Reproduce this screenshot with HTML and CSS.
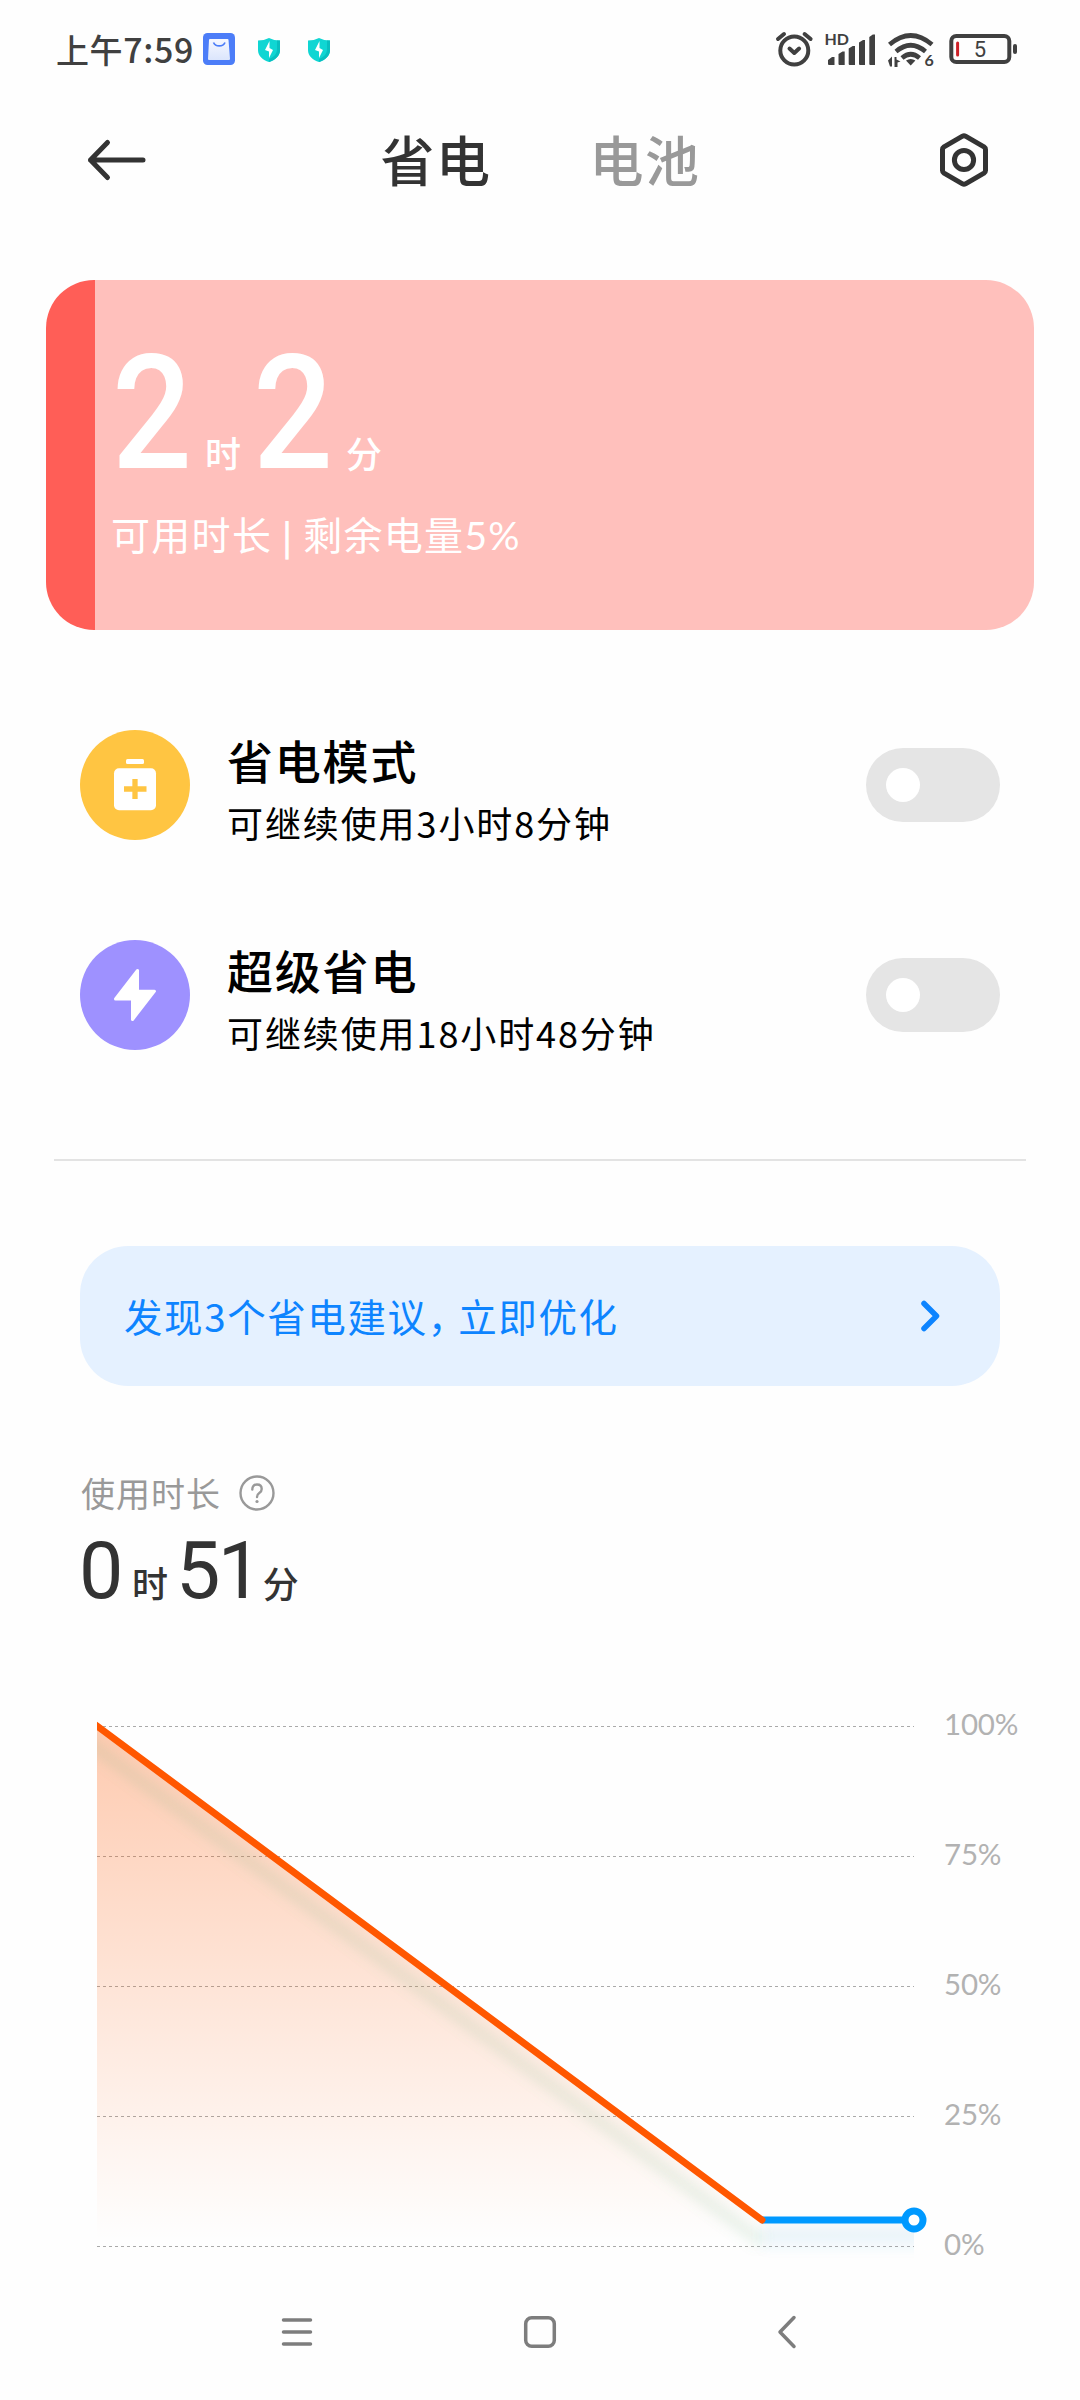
FILE: index.html
```html
<!DOCTYPE html>
<html lang="zh-CN">
<head>
<meta charset="utf-8">
<title>省电与电池</title>
<link rel="stylesheet" href="styles.css">
</head>
<body>
<div class="screen">
  <div class="status">
    <div class="status-left">
      <span class="clock">上午<span class="clock-digits">7:59</span></span>
      <svg class="app-icon" width="32" height="32" viewBox="0 0 32 32">
        <defs><linearGradient id="bag" x1="0" y1="0" x2="0" y2="1"><stop offset="0" stop-color="#f6f8ff"/><stop offset="1" stop-color="#dbe5fc"/></linearGradient></defs>
        <rect width="32" height="32" rx="4.5" fill="#4c7df8"/>
        <path d="M7 6h17.500q1 0 1 1l1.500 19q0 1-1 1H6q-1 0-1-1L6 7q0-1 1-1z" fill="url(#bag)"/>
        <path d="M10.500 9.500c2 4.500 9.500 4.500 11.500 0" fill="none" stroke="#4c7df8" stroke-width="1.700"/>
      </svg>
      <svg class="shield" width="22" height="24" viewBox="0 0 22 24">
        <path d="M11 0q5 2.500 11 2.500V12c0 6-5 10-11 12C5 22 0 18 0 12V2.500Q6 2.500 11 0z" fill="#0fd6d3"/>
        <path d="M19 2.400l3 .1V12c0 6-5 10-11 12l0-3c5-2 8-5 8-10z" fill="#08bfc0"/>
        <path d="M11.500 3v7l3.500 2-4 8v-6.500L7 12z" fill="#fff"/>
      </svg>
      <svg class="shield" width="22" height="24" viewBox="0 0 22 24">
        <path d="M11 0q5 2.500 11 2.500V12c0 6-5 10-11 12C5 22 0 18 0 12V2.500Q6 2.500 11 0z" fill="#0fd6d3"/>
        <path d="M19 2.400l3 .1V12c0 6-5 10-11 12l0-3c5-2 8-5 8-10z" fill="#08bfc0"/>
        <path d="M11.500 3v7l3.500 2-4 8v-6.500L7 12z" fill="#fff"/>
      </svg>
    </div>
    <svg width="245" height="40" viewBox="775 30 245 40" fill="none" stroke="#404040" stroke-linecap="round" stroke-linejoin="round">
      <g stroke-width="4">
        <circle cx="794.300" cy="50.500" r="14"/>
        <path d="M778 39l6-5M804.600 34l6 5M789.500 48.500l4.800 4.500 4.800-4.500"/>
      </g>
      <g fill="#404040" stroke="none">
        <text class="hd" x="824.500" y="45">HD</text>
        <path d="M828 60l4-3h2.500v8h-5.500q-1 0-1-1zM838.500 54l4-2.500h2.200V65h-5.200q-1 0-1-1zM848.700 48.500l4-2.500h2.300V65h-5.300q-1 0-1-1zM859 42.500l4-2.500h2V65h-5q-1 0-1-1zM869.300 37l3.500-2.500h2.200V65h-4.700q-1 0-1-1z"/>
        <path d="M906 60.500q4.700-3 9.400 0L910.700 65.500z"/>
        <path d="M888 60.500l4-4 0 10h-2zM894.500 57h2l0 2.500 4 2-3 1v4.500h-3z" />
        <text class="hd" x="924.600" y="66.200">6</text>
      </g>
      <g stroke-width="4.600" stroke-linecap="butt">
        <path d="M889.500 44.500Q910.700 26.500 932 44.500M896 51.500Q910.700 39 925.500 51.500M902 58Q910.700 50.500 919.500 58"/>
      </g>
      <rect x="951.300" y="36" width="58" height="26" rx="5" stroke-width="4"/>
      <path d="M1015 46v6" stroke-width="4"/>
      <path d="M957.600 43v12" stroke="#cd2027" stroke-width="3"/>
      <text class="level" x="980" y="57.300" fill="#404040" stroke="none" text-anchor="middle">5</text>
    </svg>
  </div>

  <div class="header">
    <svg width="60" height="44" viewBox="87 138.500 60 44" fill="none" stroke="#333" stroke-width="5" stroke-linecap="round" stroke-linejoin="round"><path d="M143 160.500H90.500M107.500 143L90.500 160.500l17 17.500"/></svg>
    <div class="tabs"><span class="tab tab-on">省电</span><span class="tab">电池</span></div>
    <svg width="52" height="56" viewBox="0 0 52 56" fill="none" stroke="#333" stroke-width="5" stroke-linejoin="round"><path d="M24.500 4.200q1.500-.8 3 0l18.500 10.600q1.500 1 1.500 2.700v21q0 1.700-1.500 2.700L27.500 51.800q-1.500.8-3 0L6 41.200q-1.500-1-1.500-2.700v-21q0-1.700 1.500-2.700z"/><circle cx="26" cy="28" r="9.600"/></svg>
  </div>

  <div class="charge">
    <div class="charge-time"><span class="charge-num">2</span><span class="unit">时</span><span class="charge-num">2</span><span class="unit">分</span></div>
    <div class="charge-note"><span>可用时长</span><span class="bar">|</span><span>剩余电量<span class="pct">5%</span></span></div>
  </div>

  <div class="mode">
    <svg width="110" height="110" viewBox="0 0 110 110"><circle cx="55" cy="55" r="55" fill="#ffc542"/><rect x="46" y="29" width="18" height="5" rx="1.500" fill="#fff"/><rect x="34" y="38.300" width="42" height="42" rx="5" fill="#fff"/><path d="M55 49v20M44 59h22.500" stroke="#ffc542" stroke-width="5.300"/></svg>
    <div class="mode-text"><div class="mode-name">省电模式</div><div class="mode-note">可继续使用3小时8分钟</div></div>
    <div class="toggle"></div>
  </div>
  <div class="mode">
    <svg width="110" height="110" viewBox="0 0 110 110"><circle cx="55" cy="55" r="55" fill="#9e91ff"/><path d="M57.500 30.500V51.200h17L52.500 79.500V59H35.500z" fill="#fff" stroke="#fff" stroke-width="3" stroke-linejoin="round"/></svg>
    <div class="mode-text"><div class="mode-name">超级省电</div><div class="mode-note">可继续使用18小时48分钟</div></div>
    <div class="toggle"></div>
  </div>

  <hr class="rule">

  <div class="advice">
    <span class="advice-text">发现3个省电建议<span class="comma">，</span>立即优化</span>
    <svg width="20" height="32" viewBox="0 0 20 32" fill="none" stroke="#0d84ff" stroke-width="5.500" stroke-linecap="round" stroke-linejoin="round"><path d="M4 3.500L16.500 16 4 28.500"/></svg>
  </div>

  <div class="usage-label"><span class="usage-title">使用时长</span>
    <svg width="38" height="38" viewBox="0 0 38 38" fill="none" stroke="#999" stroke-width="2.400" stroke-linecap="round"><circle cx="19" cy="19" r="16.500"/><path d="M14.300 15.500q0-5 4.700-5t4.700 4.500q0 2.400-2.400 4-2.300 1.600-2.300 4"/><circle cx="19" cy="27.500" r="1.600" fill="#999" stroke="none"/></svg>
  </div>
  <div class="usage-time"><span class="usage-num">0</span><span class="unit unit-hour">时</span><span class="usage-num">51</span><span class="unit unit-minute">分</span></div>

  <div class="chart">
    <svg width="835" height="566" viewBox="97 1714 835 566" fill="none">
      <defs>
        <linearGradient id="area" gradientUnits="userSpaceOnUse" x1="0" y1="1726" x2="0" y2="2240"><stop offset="0" stop-color="#ff5700" stop-opacity=".31"/><stop offset="1" stop-color="#ff5700" stop-opacity="0"/></linearGradient>
        <filter id="soft" filterUnits="userSpaceOnUse" x="60" y="1700" width="900" height="600"><feGaussianBlur stdDeviation="6"/></filter>
        <clipPath id="plot"><rect x="97" y="1714" width="817" height="566"/></clipPath>
      </defs>
      <path d="M97 1726.500h817M97 1856.500h817M97 1986.500h817M97 2116.500h817M97 2246.500h817" stroke="#aaa" stroke-dasharray="3 3"/>
      <path d="M97 1726L762 2220H914V2246H97z" fill="url(#area)"/>
      <g clip-path="url(#plot)">
        <path d="M80 1736L762 2242" stroke="#6fb080" stroke-opacity=".14" stroke-width="14" filter="url(#soft)"/>
        <path d="M762 2236H940" stroke="#2a9fd8" stroke-opacity=".09" stroke-width="22" filter="url(#soft)"/>
        <path d="M762 2220H914" stroke="#09f" stroke-width="7"/>
        <path d="M90 1720.800L97 1726 762 2220" stroke="#ff5700" stroke-width="7" stroke-linecap="round"/>
      </g>
      <circle cx="914" cy="2220" r="9" fill="#fff" stroke="#09f" stroke-width="7"/>
    </svg>
    <div class="scale"><span>100%</span><span>75%</span><span>50%</span><span>25%</span><span>0%</span></div>
  </div>

  <div class="nav">
    <svg width="36" height="36" viewBox="0 0 36 36" stroke="#7d7d7d" stroke-width="3.500" stroke-linecap="round"><path d="M4.500 6h27M4.500 18h27M4.500 30h27"/></svg>
    <svg class="nav-home" width="36" height="36" viewBox="0 0 36 36" fill="none" stroke="#7d7d7d" stroke-width="3.500"><rect x="3.700" y="3.700" width="28.600" height="28.600" rx="6"/></svg>
    <svg width="36" height="36" viewBox="0 0 36 36" fill="none" stroke="#7d7d7d" stroke-width="3.500" stroke-linecap="round" stroke-linejoin="round"><path d="M25 3.500L11 18l14 14.500"/></svg>
  </div>
</div>
</body>
</html>
```
FILE: styles.css
```css
* { box-sizing: border-box; }
body {
  margin: 0;
  background: #fefefe;
  color: #333;
  font-family: "Noto Sans CJK SC", sans-serif;
}
svg { display: block; flex: none; }
.screen {
  width: 1080px;
  height: 2400px;
  overflow: hidden;
  display: flex;
  flex-direction: column;
}
.status {
  height: 100px;
  padding: 0 60px 0 56px;
  display: flex;
  align-items: center;
  justify-content: space-between;
}
.status-left { display: flex; align-items: center; }
.clock {
  width: 147px;
  font-size: 33px;
  line-height: 46px;
  font-weight: 500;
  letter-spacing: 0.6px;
  color: #404040;
  white-space: nowrap;
  padding-bottom: 3px;
}
.clock-digits { font-size: 34px; }
.app-icon { margin-right: 23px; margin-top: -2px; }
.shield { margin-right: 28px; }
.hd { font: 700 16px Lato, sans-serif; }
.level { font: 400 22px Roboto, sans-serif; }
.header {
  height: 120px;
  padding: 0 90px 0 87px;
  display: flex;
  align-items: center;
  justify-content: space-between;
}
.tabs {
  display: flex;
  gap: 98px;
  margin-right: 4px;
  font-size: 54px;
  line-height: 76px;
  letter-spacing: 1.5px;
  padding-bottom: 2px;
  font-weight: 500;
}
.tab { color: #999; }
.tab-on { color: #333; }
.charge {
  width: 988px;
  height: 350px;
  margin: 60px 46px 0;
  padding-left: 66px;
  border-radius: 48px;
  background: linear-gradient(90deg, #ff5e57 5%, #ffc0bc 5%);
  color: #fff;
}
.charge-time {
  display: flex;
  align-items: baseline;
  height: 225px;
  padding-top: 74px;
  line-height: 120px;
}
.charge-num {
  width: 93px;
  font-family: Roboto, sans-serif;
  font-size: 160px;
  font-weight: 500;
  transform: scaleX(0.88);
  transform-origin: left;
}
.charge-time .unit { width: 48px; }
.unit { font-size: 36px; font-weight: 500; }
.charge-note {
  display: flex;
  align-items: baseline;
  margin-left: -1px;
  font-size: 39px;
  line-height: 56px;
  letter-spacing: 1.3px;
  white-space: nowrap;
}
.bar { width: 31px; font-size: 34px; font-weight: 700; text-align: center; }
.pct { font-family: Lato, sans-serif; }
.mode {
  height: 110px;
  margin: 100px 80px 0;
  display: flex;
  align-items: center;
}
.mode-text { flex: 1; padding: 8px 0 0 37px; color: #000; }
.mode-name {
  font-size: 46px;
  line-height: 66px;
  letter-spacing: 1.8px;
  font-weight: 500;
}
.mode-note {
  font-size: 36px;
  line-height: 60px;
  letter-spacing: 1.9px;
}
.toggle {
  width: 134px;
  height: 74px;
  padding: 20px;
  border-radius: 37px;
  background: #e5e5e5;
}
.toggle::before {
  content: "";
  display: block;
  width: 34px;
  height: 34px;
  border-radius: 50%;
  background: #fff;
}
.rule {
  width: 972px;
  height: 2px;
  margin: 109px 54px 0;
  border: 0;
  background: #e3e3e3;
}
.advice {
  height: 140px;
  margin: 85px 80px 0;
  padding: 0 60px 0 44px;
  display: flex;
  align-items: center;
  justify-content: space-between;
  border-radius: 48px;
  background: #e5f1ff;
  color: #0d84ff;
  font-size: 38.5px;
  letter-spacing: 1.6px;
}
.advice-text { padding-bottom: 3px; }
.comma { letter-spacing: -8px; }
.usage-label {
  display: flex;
  align-items: center;
  gap: 17px;
  height: 50px;
  margin: 82px 0 0 81px;
  color: #999;
  font-size: 34px;
  letter-spacing: 1px;
}
.usage-title { padding-bottom: 2px; }
.usage-time {
  display: flex;
  align-items: baseline;
  height: 100px;
  margin-left: 79px;
  padding-top: 23px;
  line-height: 60px;
}
.usage-num {
  font-family: Roboto, sans-serif;
  font-size: 79px;
  letter-spacing: -2.5px;
}
.unit-hour { width: 55px; padding-left: 11px; }
.unit-minute { padding-left: 3px; }
.chart {
  height: 566px;
  margin: 96px 0 0 97px;
  display: flex;
  gap: 12px;
}
.scale {
  height: 560px;
  margin-top: -10px;
  display: flex;
  flex-direction: column;
  justify-content: space-between;
  font: 400 29.5px/40px Lato, sans-serif;
  letter-spacing: -0.2px;
  color: #b2b2b2;
}
.nav {
  display: flex;
  justify-content: space-between;
  padding: 34px 275px 0 279px;
}
.nav-home { margin-right: 4px; }
```
